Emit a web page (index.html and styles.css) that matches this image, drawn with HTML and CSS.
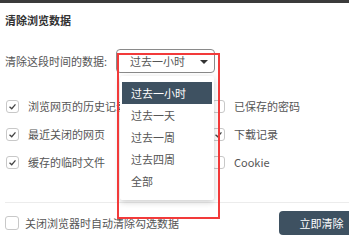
FILE: index.html
```html
<!DOCTYPE html>
<html lang="zh-CN">
<head>
    <meta charset="UTF-8">
    <meta name="viewport" content="width=device-width, initial-scale=1.0">
    <title>清除浏览数据</title>
    <link rel="stylesheet" href="styles.css">
</head>
<body>
    <div class="topbar"></div>
    <div class="panel">
        <h2 class="title">清除浏览数据</h2>

        <div class="range">
            <span class="range-label">清除这段时间的数据:</span>
            <div class="select">
                <span class="select-value">过去一小时</span>
                <span class="select-arrow"></span>

                <!-- 펼쳐진 드롭다운 -->
                <ul class="dropdown">
                    <li class="active">过去一小时</li>
                    <li>过去一天</li>
                    <li>过去一周</li>
                    <li>过去四周</li>
                    <li>全部</li>
                </ul>
                <div class="highlight"></div>
            </div>
        </div>

        <div class="options">
            <label class="option">
                <span class="box"><svg viewBox="0 0 13 13"><path d="M3 6.8 L5.6 9.2 L10 4"/></svg></span>
                浏览网页的历史记录
            </label>
            <label class="option">
                <span class="box"></span>
                已保存的密码
            </label>
            <label class="option">
                <span class="box"><svg viewBox="0 0 13 13"><path d="M3 6.8 L5.6 9.2 L10 4"/></svg></span>
                最近关闭的网页
            </label>
            <label class="option">
                <span class="box"><svg viewBox="0 0 13 13"><path d="M3 6.8 L5.6 9.2 L10 4"/></svg></span>
                下载记录
            </label>
            <label class="option">
                <span class="box"><svg viewBox="0 0 13 13"><path d="M3 6.8 L5.6 9.2 L10 4"/></svg></span>
                缓存的临时文件
            </label>
            <label class="option">
                <span class="box"></span>
                Cookie
            </label>
        </div>

        <div class="divider"></div>

        <div class="footer">
            <label class="option auto-clear">
                <span class="box"></span>
                关闭浏览器时自动清除勾选数据
            </label>
            <button class="btn-clear">立即清除</button>
        </div>
    </div>
</body>
</html>
```

FILE: styles.css
```css
body {
    margin: 0;
    width: 349px;
    height: 243px;
    overflow: hidden;
    background: #fff;
    color: #555;
    font-family: "Noto Sans CJK SC", "Noto Sans", sans-serif;
    font-size: 11px;
}

.topbar {
    height: 3px;
    background: #3b3b3b;
}

.panel {
    padding-left: 5px;
}

.title {
    margin: 0;
    padding-top: 9px;
    font-size: 11px;
    line-height: 16px;
    font-weight: bold;
    color: #333;
}

.range {
    display: flex;
    align-items: center;
    height: 24px;
    margin-top: 21px;
}

.range-label {
    width: 111px;
}

.select {
    position: relative;
    display: flex;
    align-items: center;
    box-sizing: border-box;
    width: 99px;
    height: 24px;
    padding-left: 13px;
    border: 1px solid #8a8a8a;
    border-radius: 4px;
}

.select-arrow {
    position: absolute;
    top: 10px;
    right: 6px;
    border-left: 4px solid transparent;
    border-right: 4px solid transparent;
    border-top: 4px solid #333;
}

.dropdown {
    position: absolute;
    top: 26px;
    left: 3px;
    z-index: 5;
    width: 94px;
    margin: 0;
    padding: 6px 2px 8px;
    box-sizing: border-box;
    list-style: none;
    background: #fff;
    box-shadow: 0 2px 6px rgba(0, 0, 0, 0.2);
    border-radius: 2px;
}

.dropdown li {
    height: 22px;
    line-height: 22px;
    padding-left: 9px;
    color: #555;
}

.dropdown li.active {
    background: #3e5161;
    color: #fff;
}

.highlight {
    position: absolute;
    top: 3px;
    left: 0;
    z-index: 6;
    width: 103px;
    height: 166px;
    box-sizing: border-box;
    border: 2px solid #f23a3a;
}

.options {
    display: grid;
    grid-template-columns: 206px auto;
    grid-auto-rows: 28px;
    margin-top: 19px;
    padding-left: 1px;
}

.option {
    display: flex;
    align-items: center;
    white-space: nowrap;
}

.box {
    display: inline-flex;
    width: 13px;
    height: 13px;
    margin-right: 9px;
    box-sizing: border-box;
    border: 1px solid #c8c8c8;
    border-radius: 3px;
    flex-shrink: 0;
}

.box svg {
    width: 11px;
    height: 11px;
    fill: none;
    stroke: #444;
    stroke-width: 1.5;
}

.divider {
    height: 1px;
    margin-top: 26px;
    background: #ececec;
}

.footer {
    display: flex;
    align-items: center;
    height: 24px;
    margin-top: 8px;
}

.auto-clear .box {
    width: 14px;
    height: 14px;
    margin-right: 6px;
}

.btn-clear {
    flex-shrink: 0;
    width: 85px;
    height: 24px;
    margin-left: auto;
    margin-right: -15px;
    border: none;
    border-radius: 4px;
    background: #3e5161;
    color: #fff;
    font-family: inherit;
    font-size: 11px;
    padding: 0;
}
```
